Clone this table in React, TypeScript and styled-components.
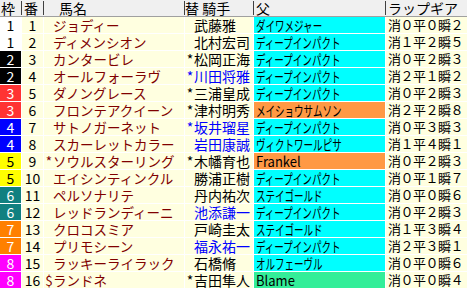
import styled, { createGlobalStyle } from "styled-components";

const GlobalStyle = createGlobalStyle`
  body {
    margin: 0;
    background: #ffffff;
    font-family: "Noto Sans CJK JP", "Noto Sans", sans-serif;
  }
`;

const COLS = "21px 21px 140px 68px 131px 1fr";

const WAKU: Record<number, { bg: string; fg: string }> = {
  1: { bg: "#ffffff", fg: "#000000" },
  2: { bg: "#000000", fg: "#ffffff" },
  3: { bg: "#ff3333", fg: "#ffffff" },
  4: { bg: "#0000ff", fg: "#ffffff" },
  5: { bg: "#ffff00", fg: "#000000" },
  6: { bg: "#118080", fg: "#ffffff" },
  7: { bg: "#ff8000", fg: "#ffffff" },
  8: { bg: "#ff00ff", fg: "#ffffff" },
};

const SIRE_BG = {
  cyan: "#00ffff",
  orange: "#ff9944",
  green: "#33ee99",
};

type Horse = {
  waku: number;
  num: number;
  mark?: string;
  name: string;
  jMark?: boolean;
  jockey: string;
  blue?: boolean;
  sire: string;
  sireBg: keyof typeof SIRE_BG;
  gear: string;
};

const horses: Horse[] = [
  { waku: 1, num: 1, name: "ジョディー", jockey: "武藤雅", sire: "ダイワメジャー", sireBg: "cyan", gear: "消０平０瞬２" },
  { waku: 1, num: 2, name: "ディメンシオン", jockey: "北村宏司", sire: "ディープインパクト", sireBg: "cyan", gear: "消１平２瞬５" },
  { waku: 2, num: 3, name: "カンタービレ", jMark: true, jockey: "松岡正海", sire: "ディープインパクト", sireBg: "cyan", gear: "消０平２瞬３" },
  { waku: 2, num: 4, name: "オールフォーラヴ", jMark: true, jockey: "川田将雅", blue: true, sire: "ディープインパクト", sireBg: "cyan", gear: "消２平１瞬２" },
  { waku: 3, num: 5, name: "ダノングレース", jMark: true, jockey: "三浦皇成", sire: "ディープインパクト", sireBg: "cyan", gear: "消０平２瞬３" },
  { waku: 3, num: 6, name: "フロンテアクイーン", jMark: true, jockey: "津村明秀", sire: "メイショウサムソン", sireBg: "orange", gear: "消２平２瞬８" },
  { waku: 4, num: 7, name: "サトノガーネット", jMark: true, jockey: "坂井瑠星", blue: true, sire: "ディープインパクト", sireBg: "cyan", gear: "消０平３瞬３" },
  { waku: 4, num: 8, name: "スカーレットカラー", jockey: "岩田康誠", blue: true, sire: "ヴィクトワールピサ", sireBg: "cyan", gear: "消１平４瞬１" },
  { waku: 5, num: 9, mark: "*", name: "ソウルスターリング", jMark: true, jockey: "木幡育也", sire: "Frankel", sireBg: "orange", gear: "消０平２瞬３" },
  { waku: 5, num: 10, name: "エイシンティンクル", jockey: "勝浦正樹", sire: "ディープインパクト", sireBg: "cyan", gear: "消０平１瞬７" },
  { waku: 6, num: 11, name: "ペルソナリテ", jockey: "丹内祐次", sire: "ステイゴールド", sireBg: "cyan", gear: "消０平０瞬６" },
  { waku: 6, num: 12, name: "レッドランディーニ", jockey: "池添謙一", blue: true, sire: "ディープインパクト", sireBg: "cyan", gear: "消０平２瞬３" },
  { waku: 7, num: 13, name: "クロコスミア", jockey: "戸崎圭太", sire: "ステイゴールド", sireBg: "cyan", gear: "消１平３瞬４" },
  { waku: 7, num: 14, name: "プリモシーン", jockey: "福永祐一", blue: true, sire: "ディープインパクト", sireBg: "cyan", gear: "消２平３瞬１" },
  { waku: 8, num: 15, name: "ラッキーライラック", jockey: "石橋脩", sire: "オルフェーヴル", sireBg: "cyan", gear: "消０平０瞬６" },
  { waku: 8, num: 16, mark: "$", name: "ランドネ", jMark: true, jockey: "吉田隼人", sire: "Blame", sireBg: "green", gear: "消０平０瞬４" },
];

const Table = styled.div`
  width: 467px;
  height: 289px;
  overflow: hidden;
  background: #ffffff;
`;

const HeaderRow = styled.div`
  display: grid;
  grid-template-columns: ${COLS};
  column-gap: 1px;
  height: 16px;
  background: #f0f0f0;
  border-bottom: 1px solid #a0a0a0;
`;

const HeaderCell = styled.div<{ $pad?: number; $last?: boolean }>`
  position: relative;
  padding-left: ${(p) => p.$pad ?? 1}px;
  font-size: 14px;
  line-height: 16px;
  color: #000000;
  white-space: pre;

  &::after {
    content: "";
    display: ${(p) => (p.$last ? "none" : "block")};
    position: absolute;
    right: -1px;
    top: 1px;
    bottom: 1px;
    width: 1px;
    background: #404040;
  }
`;

const Row = styled.div`
  display: grid;
  grid-template-columns: ${COLS};
  column-gap: 1px;
  height: 16px;
  margin-bottom: 1px;
  font-size: 13px;
  line-height: 16px;
`;

const Cell = styled.div`
  background: #ffffe0;
  white-space: nowrap;
  overflow: hidden;
`;

const WakuCell = styled(Cell)<{ $bg: string; $fg: string }>`
  background: ${(p) => p.$bg};
  color: ${(p) => p.$fg};
  text-align: center;
  font-size: 14px;
`;

const NumCell = styled(Cell)`
  text-align: center;
  color: #000000;
  font-size: 14px;
`;

const NameCell = styled(Cell)`
  display: flex;
  color: #800000;
  padding-left: 1px;
  font-size: 13.5px;
`;

const Mark = styled.span`
  display: inline-block;
  flex: none;
  width: 8px;
  text-align: center;
`;

const JockeyCell = styled(Cell)<{ $blue?: boolean }>`
  display: flex;
  color: ${(p) => (p.$blue ? "#0000ff" : "#000000")};
  padding-left: 1px;
  font-size: 14px;
`;

const SireCell = styled(Cell)<{ $bg: string }>`
  background: ${(p) => p.$bg};
  color: #000000;
  padding-left: 2px;
  font-size: 14px;
`;

const SireText = styled.span<{ $narrow: boolean }>`
  display: inline-block;
  transform: scaleX(${(p) => (p.$narrow ? 0.68 : 0.93)});
  transform-origin: left center;
`;

const GearCell = styled(Cell)`
  color: #000000;
  padding-left: 2px;
  letter-spacing: -0.5px;
`;

export default function App() {
  return (
    <>
      <GlobalStyle />
      <Table>
        <HeaderRow>
          <HeaderCell>枠</HeaderCell>
          <HeaderCell $pad={2}>番</HeaderCell>
          <HeaderCell $pad={15}>馬名</HeaderCell>
          <HeaderCell $pad={0}>替 騎手</HeaderCell>
          <HeaderCell $pad={2}>父</HeaderCell>
          <HeaderCell $pad={2} $last>ラップギア</HeaderCell>
        </HeaderRow>
        {horses.map((h) => (
          <Row key={h.num}>
            <WakuCell $bg={WAKU[h.waku].bg} $fg={WAKU[h.waku].fg}>
              {h.waku}
            </WakuCell>
            <NumCell>{h.num}</NumCell>
            <NameCell>
              <Mark>{h.mark ?? ""}</Mark>
              {h.name}
            </NameCell>
            <JockeyCell $blue={h.blue}>
              <Mark>{h.jMark ? "*" : ""}</Mark>
              {h.jockey}
            </JockeyCell>
            <SireCell $bg={SIRE_BG[h.sireBg]}>
              <SireText $narrow={!/^[A-Za-z]/.test(h.sire)}>{h.sire}</SireText>
            </SireCell>
            <GearCell>{h.gear}</GearCell>
          </Row>
        ))}
      </Table>
    </>
  );
}
